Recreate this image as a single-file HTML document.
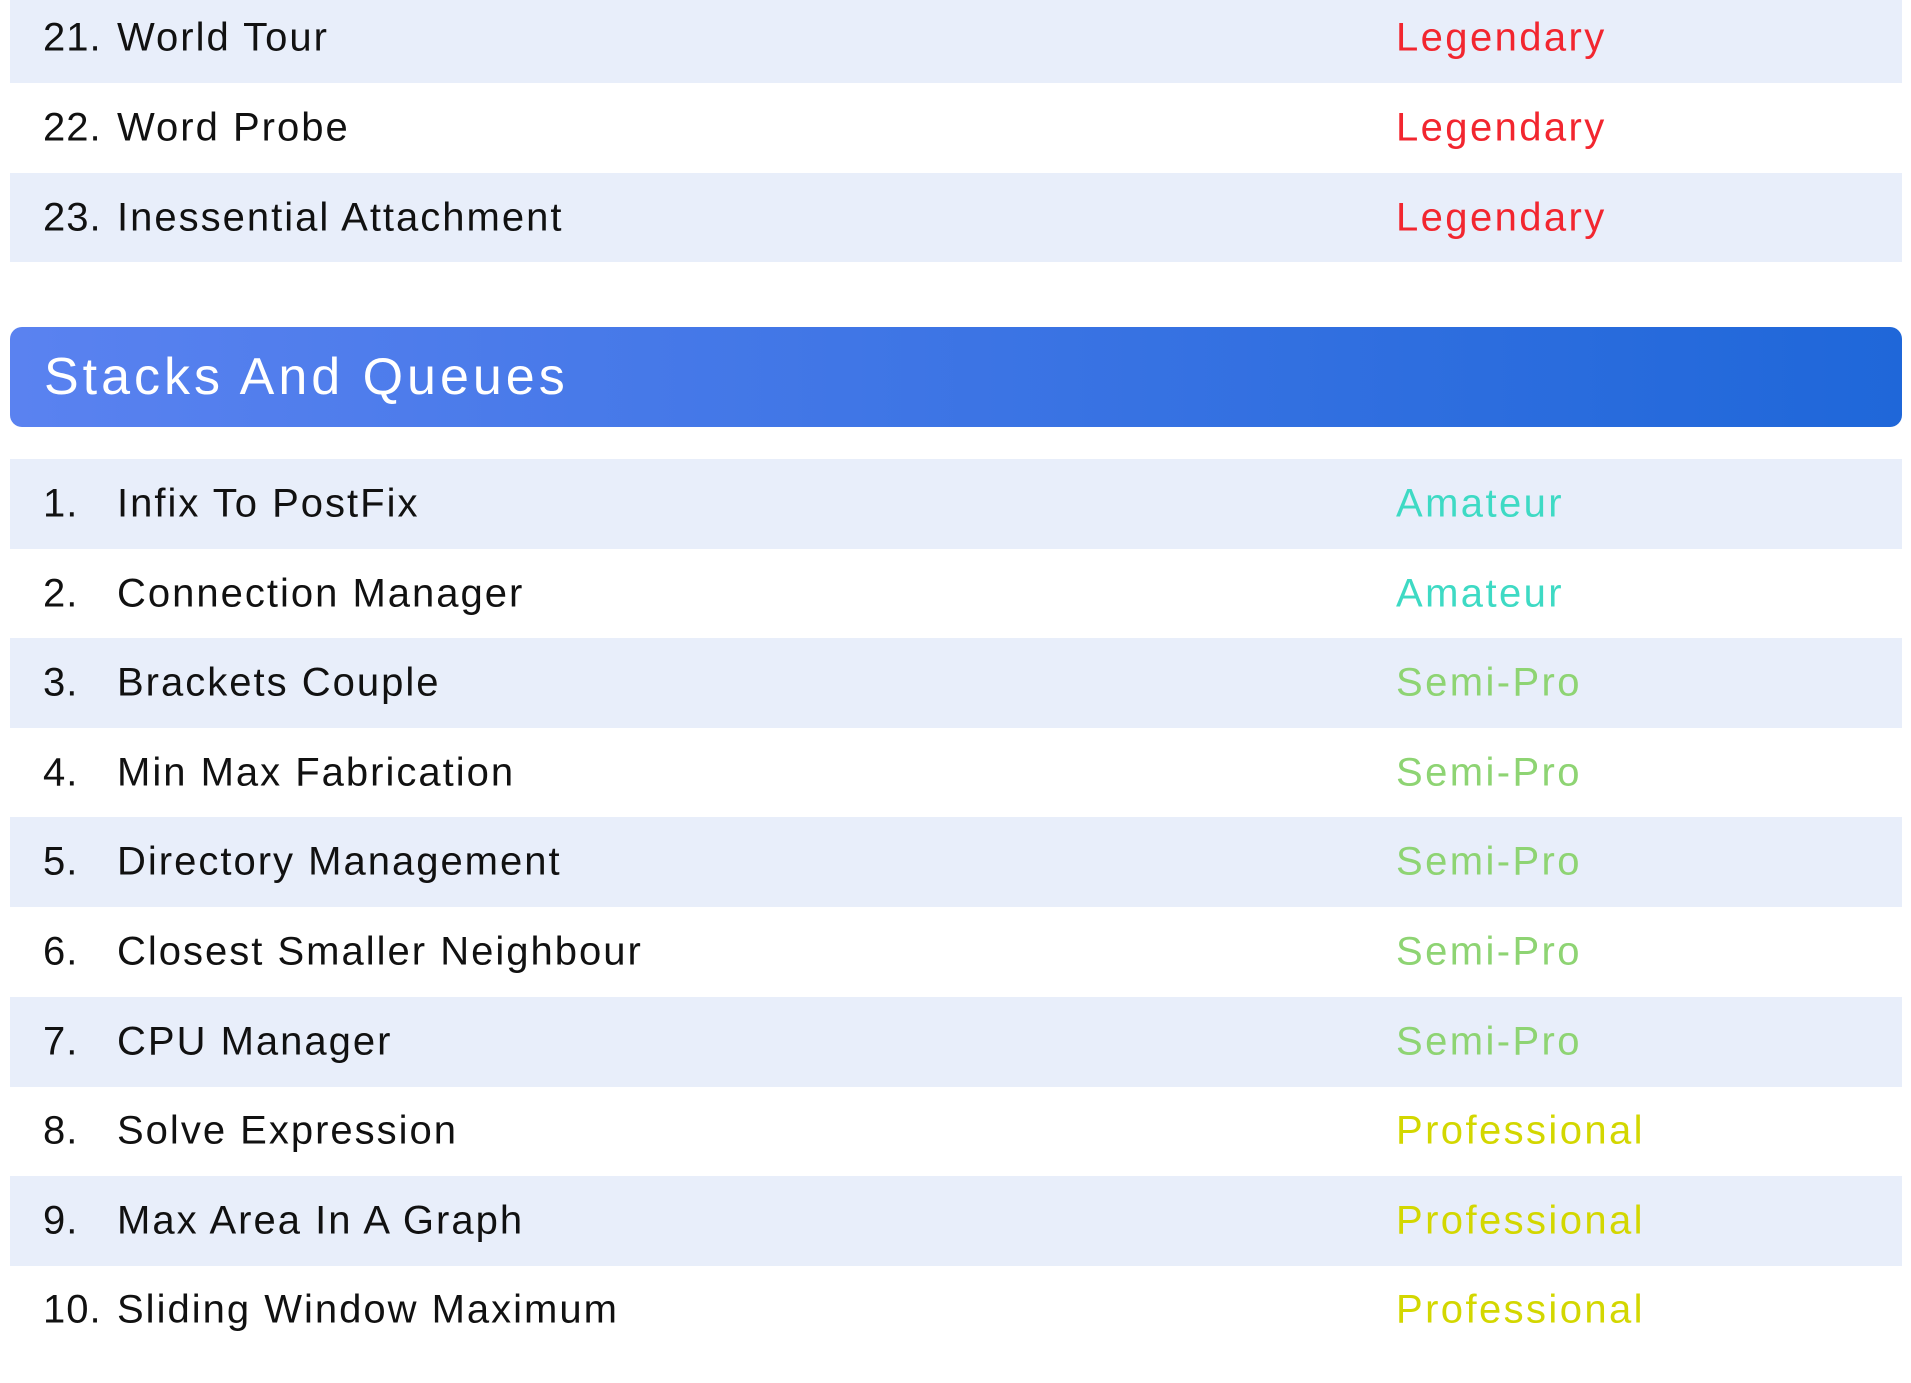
<!DOCTYPE html>
<html><head><meta charset="utf-8"><style>
*{margin:0;padding:0;box-sizing:border-box}
body{width:1911px;height:1383px;background:#fff;font-family:"Liberation Sans",sans-serif;position:relative;overflow:hidden}
.r{position:absolute;left:10px;width:1892px;height:90px;font-size:40px;color:#111;letter-spacing:2px}
.r.s{background:#e8eefa}
.r span{position:absolute;top:50%;transform:translateY(-50%);white-space:nowrap}
.n{left:33px;letter-spacing:1px}.t{left:107px}.d{left:1386px;letter-spacing:2.4px}
.L{color:#f2262f}.A{color:#3edac4}.S{color:#8ed473}.P{color:#d3d700}
.h{position:absolute;left:10px;top:327px;width:1892px;height:100px;border-radius:12px;background:linear-gradient(90deg,#5a82f0,#1f67d9);color:#fff;font-size:52px;letter-spacing:4px}
.h span{position:absolute;left:34px;top:50%;transform:translateY(-50%)}
</style></head><body>
<div class="r s" style="top:-7px;height:90px"><span class="n">21.</span><span class="t">World Tour</span><span class="d L">Legendary</span></div>
<div class="r" style="top:83px"><span class="n">22.</span><span class="t">Word Probe</span><span class="d L">Legendary</span></div>
<div class="r s" style="top:173px;height:89px"><span class="n">23.</span><span class="t">Inessential Attachment</span><span class="d L">Legendary</span></div>
<div class="h"><span>Stacks And Queues</span></div>
<div class="r s" style="top:459px"><span class="n">1.</span><span class="t">Infix To PostFix</span><span class="d A">Amateur</span></div>
<div class="r" style="top:549px"><span class="n">2.</span><span class="t">Connection Manager</span><span class="d A">Amateur</span></div>
<div class="r s" style="top:638px"><span class="n">3.</span><span class="t">Brackets Couple</span><span class="d S">Semi-Pro</span></div>
<div class="r" style="top:728px"><span class="n">4.</span><span class="t">Min Max Fabrication</span><span class="d S">Semi-Pro</span></div>
<div class="r s" style="top:817px"><span class="n">5.</span><span class="t">Directory Management</span><span class="d S">Semi-Pro</span></div>
<div class="r" style="top:907px"><span class="n">6.</span><span class="t">Closest Smaller Neighbour</span><span class="d S">Semi-Pro</span></div>
<div class="r s" style="top:997px"><span class="n">7.</span><span class="t">CPU Manager</span><span class="d S">Semi-Pro</span></div>
<div class="r" style="top:1086px"><span class="n">8.</span><span class="t">Solve Expression</span><span class="d P">Professional</span></div>
<div class="r s" style="top:1176px"><span class="n">9.</span><span class="t">Max Area In A Graph</span><span class="d P">Professional</span></div>
<div class="r" style="top:1265px"><span class="n">10.</span><span class="t">Sliding Window Maximum</span><span class="d P">Professional</span></div>
</body></html>
